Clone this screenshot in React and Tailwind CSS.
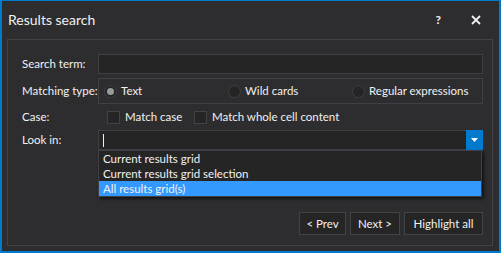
import React from 'react';

function Radio({ checked, label }) {
  return (
    <div className="flex items-center gap-[4px] whitespace-nowrap">
      <span className="w-[13px] h-[13px] rounded-full border border-[#3f3f46] bg-[#252526] flex items-center justify-center">
        {checked && <span className="w-[7px] h-[7px] rounded-full bg-[#9a9a9a]" />}
      </span>
      <span>{label}</span>
    </div>
  );
}

function Check({ label }) {
  return (
    <div className="flex items-center gap-[5px] whitespace-nowrap">
      <span className="w-[13px] h-[13px] border border-[#434346] bg-[#252526]" />
      <span>{label}</span>
    </div>
  );
}

export default function App() {
  return (
    <div
      className="w-[501px] h-[253px] bg-[#2d2d30] border-[#007acc] border-t border-l-2 border-r-2 border-b-2 flex flex-col text-[#f1f1f1] text-[11.5px]"
      style={{ fontFamily: 'Lato, "Segoe UI", sans-serif' }}
    >
      <div className="h-[38px] flex items-center pl-[6px] pr-[18px] shrink-0">
        <span className="text-[14px] leading-none">Results search</span>
        <span className="ml-auto text-[12px] font-bold">?</span>
        <svg className="ml-[30px]" width="10" height="10" viewBox="0 0 10 10">
          <path d="M1 1L9 9M9 1L1 9" stroke="#f1f1f1" strokeWidth="1.8" />
        </svg>
      </div>

      <div className="ml-[5px] mr-[6px] h-[207px] border border-[#434346] pl-[14px] pr-[9px] pt-[14px] flex flex-col whitespace-nowrap">
        <div className="flex items-center h-[20px]">
          <span className="w-[76px]">Search term:</span>
          <div className="flex-1 h-[20px] bg-[#252526] border border-[#3f3f46]" />
        </div>

        <div className="flex items-center mt-[4px] h-[26px]">
          <span className="w-[76px]">Matching type:</span>
          <div className="flex-1 h-[26px] border border-[#3f3f46] flex items-center pl-[5px]">
            <div className="w-[124px]"><Radio checked label="Text" /></div>
            <div className="w-[124px]"><Radio label="Wild cards" /></div>
            <Radio label="Regular expressions" />
          </div>
        </div>

        <div className="flex items-center mt-[4px] h-[18px]">
          <span className="w-[85px]">Case:</span>
          <div className="w-[87px]"><Check label="Match case" /></div>
          <Check label="Match whole cell content" />
        </div>

        <div className="flex items-center mt-[4px] h-[20px]">
          <span className="w-[76px]">Look in:</span>
          <div className="relative flex-1 h-[20px] bg-[#252526] border border-[#3f3f46] flex items-center">
            <span className="ml-[4px] w-px h-[13px] bg-[#f1f1f1]" />
            <div className="ml-auto w-[17px] h-[20px] -mr-px bg-[#007acc] flex items-center justify-center">
              <svg width="7" height="4" viewBox="0 0 7 4"><path d="M0 0h7L3.5 4z" fill="#fff" /></svg>
            </div>
            <div className="absolute left-[-1px] top-[19px] w-[384px] bg-[#252526] border border-[#3f3f46] shadow-[2px_2px_3px_rgba(0,0,0,0.6)] z-10">
              <div className="h-[15px] pl-[4px] leading-[15px]">Current results grid</div>
              <div className="h-[15px] pl-[4px] leading-[15px]">Current results grid selection</div>
              <div className="h-[15px] pl-[4px] leading-[15px] bg-[#3399ff]">All results grid(s)</div>
            </div>
          </div>
        </div>

        <div className="mt-auto mb-[10px] flex justify-end gap-[4px]">
          <button className="w-[47px] h-[23px] bg-[#252526] border border-[#434346]">&lt; Prev</button>
          <button className="w-[50px] h-[23px] bg-[#252526] border border-[#434346]">Next &gt;</button>
          <button className="w-[79px] h-[23px] bg-[#252526] border border-[#434346]">Highlight all</button>
        </div>
      </div>
    </div>
  );
}
